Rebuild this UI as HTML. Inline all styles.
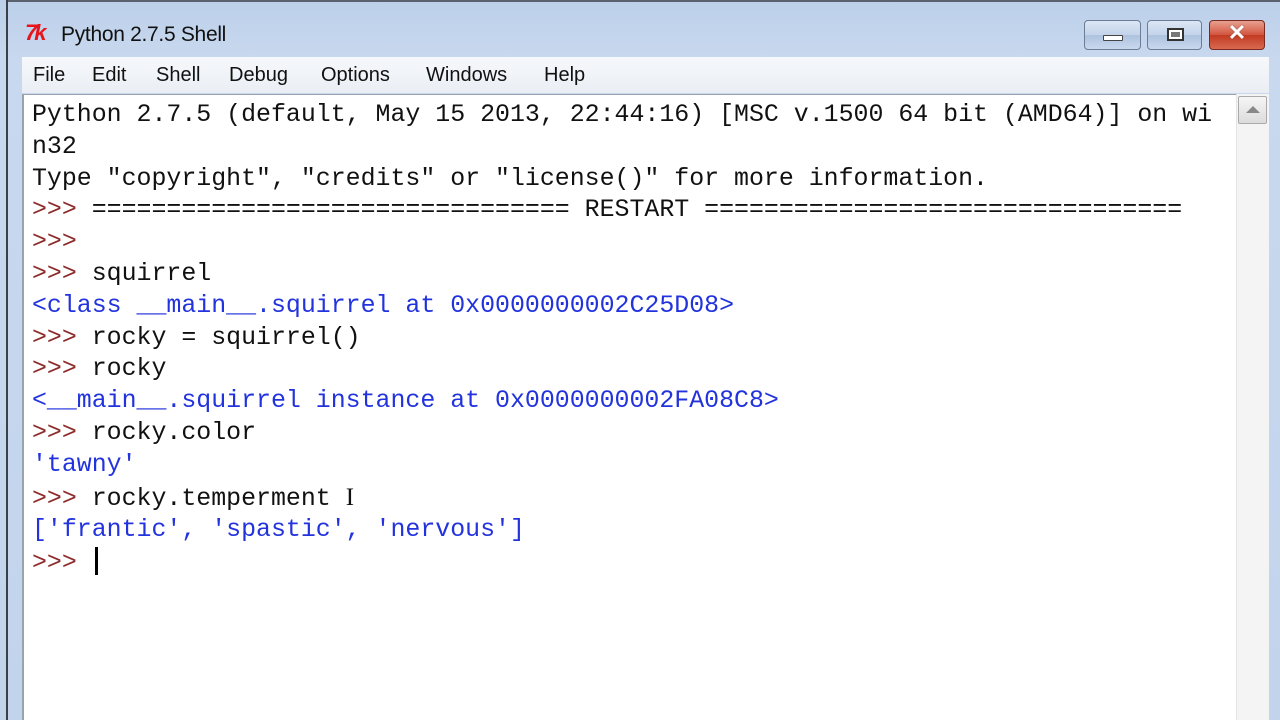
<!DOCTYPE html>
<html><head><style>
*{margin:0;padding:0;box-sizing:border-box}
body{width:1280px;height:720px;overflow:hidden;background:#c5d6ec;position:relative;font-family:"Liberation Sans",sans-serif}
.frame{position:absolute;left:0;top:0;width:1280px;height:720px;background:linear-gradient(#bcd0ea,#c8d8ee 60px,#c2d4ec)}
.edge{position:absolute;left:6px;top:0;width:2px;height:720px;background:#3a3f48}
.topedge{position:absolute;left:6px;top:0;width:1274px;height:2px;background:#5a6270}
.title{position:absolute;left:61px;top:23px;font-size:21px;color:#111;letter-spacing:-0.3px}
.tk{position:absolute;left:25px;top:20px;font-size:22px;font-weight:bold;color:#e8141c;font-style:italic;letter-spacing:-3px}
.btn{position:absolute;top:20px;height:30px;border:1px solid #6c7c94;border-radius:4px;background:linear-gradient(#dce7f5,#c3d3ea 50%,#aec2de 51%,#c8d8ee)}
.btn.close{background:linear-gradient(#e8a090,#d2553f 50%,#c23a22 51%,#d86a50);border-color:#7a2a22}
.menu{position:absolute;left:22px;top:57px;width:1247px;height:36px;background:linear-gradient(#f6f8fb,#eaeef4);font-size:20px;color:#111}
.menu span{position:absolute;top:7px}
.text{position:absolute;left:22px;top:94px;width:1214px;height:626px;background:#fff;border-left:2px solid #9aa2ac;border-top:1px solid #9aa2ac}
.sb{position:absolute;left:1236px;top:94px;width:33px;height:626px;background:#f4f4f4;border-left:1px solid #e4e4e4}
.sbtn{position:absolute;left:1238px;top:96px;width:29px;height:28px;background:linear-gradient(#f6f6f6,#dcdcdc);border:1px solid #aaa;border-radius:2px}
pre{position:absolute;left:32px;top:100px;font-family:"Liberation Mono",monospace;font-size:24.9px;line-height:31.8px;color:#111}
.p{color:#8e2c2c}.b{color:#2233dd}
.cur{display:inline-block;width:3px;height:28px;background:#000;vertical-align:-6px;margin-left:-12px}
</style></head><body>
<div class="frame"></div>
<div class="topedge"></div>
<div class="edge"></div>
<div class="tk">7k</div>
<div class="title">Python 2.7.5 Shell</div>
<div class="btn" style="left:1084px;width:57px"><div style="position:absolute;left:18px;top:14px;width:20px;height:6px;background:#fff;border:1px solid #444;border-radius:1px"></div></div>
<div class="btn" style="left:1147px;width:55px"><div style="position:absolute;left:19px;top:7px;width:17px;height:13px;border:2px solid #333;background:#fff;box-shadow:inset 0 0 0 2px #fff,inset 0 0 0 6px #777"></div></div>
<div class="btn close" style="left:1209px;width:56px"><div style="position:absolute;left:0;top:-1px;width:54px;text-align:center;color:#fff;font-size:22px;font-weight:bold;text-shadow:0 0 1px #533">✕</div></div>
<div class="menu"><span style="left:11px">File</span><span style="left:70px">Edit</span><span style="left:134px">Shell</span><span style="left:207px">Debug</span><span style="left:299px">Options</span><span style="left:404px">Windows</span><span style="left:522px">Help</span></div>
<div class="text"></div>
<div class="sb"></div>
<div class="sbtn"><div style="position:absolute;left:7px;top:9px;width:0;height:0;border-left:7px solid transparent;border-right:7px solid transparent;border-bottom:7px solid #888"></div></div>
<pre>Python 2.7.5 (default, May 15 2013, 22:44:16) [MSC v.1500 64 bit (AMD64)] on wi
n32
Type "copyright", "credits" or "license()" for more information.
<span class="p">&gt;&gt;&gt; </span>================================ RESTART ================================
<span class="p">&gt;&gt;&gt; </span>
<span class="p">&gt;&gt;&gt; </span>squirrel
<span class="b">&lt;class __main__.squirrel at 0x0000000002C25D08&gt;</span>
<span class="p">&gt;&gt;&gt; </span>rocky = squirrel()
<span class="p">&gt;&gt;&gt; </span>rocky
<span class="b">&lt;__main__.squirrel instance at 0x0000000002FA08C8&gt;</span>
<span class="p">&gt;&gt;&gt; </span>rocky.color
<span class="b">'tawny'</span>
<span class="p">&gt;&gt;&gt; </span>rocky.temperment <span style="font-family:'Liberation Serif';font-weight:300">I</span>
<span class="b">['frantic', 'spastic', 'nervous']</span>
<span class="p">&gt;&gt;&gt; </span> <span class="cur"></span></pre>
</body></html>
